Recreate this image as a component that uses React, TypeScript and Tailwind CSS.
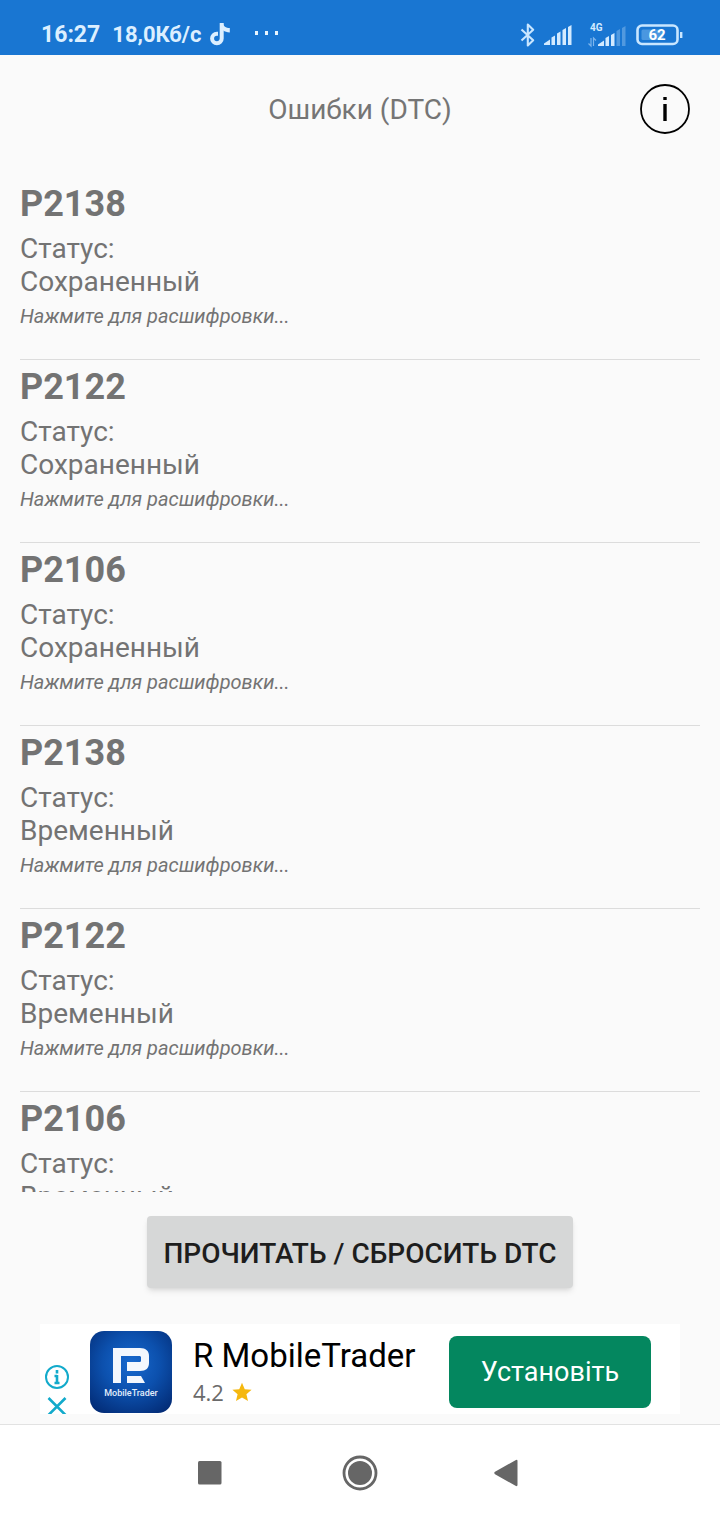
import React from "react";

const codes = [
  { code: "P2138", status: "Сохраненный" },
  { code: "P2122", status: "Сохраненный" },
  { code: "P2106", status: "Сохраненный" },
  { code: "P2138", status: "Временный" },
  { code: "P2122", status: "Временный" },
  { code: "P2106", status: "Временный" },
];

const TikTokIcon = () => (
  <svg width="20" height="24" viewBox="0 0 20 24" fill="none" aria-hidden="true">
    <path
      d="M11.700 0v15.500a4.800 4.800 0 1 1-4.800-4.800H8"
      stroke="#dcefff"
      strokeWidth="4"
    />
    <path d="M13 0c.3 3.200 2.800 5 6.800 5.100v4.300c-2.800 0-5-.8-6.800-2.200z" fill="#dcefff" />
  </svg>
);

const BluetoothIcon = () => (
  <svg width="16" height="24" viewBox="0 0 16 24" fill="none" aria-hidden="true">
    <path
      d="M1.500 6.500 13.200 17.300 7.800 22.500V1.500l5.400 5.200L1.500 17.500"
      stroke="#c9e6ff"
      strokeWidth="2.100"
      strokeLinejoin="round"
    />
  </svg>
);

const SignalIcon = () => (
  <svg width="28" height="20" viewBox="0 0 28 20" fill="#d3eaff" aria-hidden="true">
    <path d="M0 20v-1.500L6 14.500V20z" />
    <path d="M7.500 12.500 11 10.500V20H7.500z" />
    <path d="M13 8.500 16.500 6.500V20H13z" />
    <path d="M18.500 5 22 3v17h-3.500z" />
    <path d="M24 2 27.500 0v20H24z" />
  </svg>
);

const MobileSignal = () => (
  <svg width="38" height="28" viewBox="0 -3 38 28" fill="#d3eaff" aria-hidden="true">
    <text x="2" y="7" fontSize="10" fontWeight="700" fontFamily="Roboto, sans-serif">
      4G
    </text>
    <path d="M3 14v8L.5 19.500M5.500 22v-8L8 16.500" stroke="#7db5ec" strokeWidth="1.200" fill="none" />
    <path d="M10 22v-1.500l6-4V22z" />
    <path d="M17.500 14 21 12v10h-3.500z" />
    <path d="M23 11 26.500 9v13H23z" />
    <path d="M28.500 7 32 5v17h-3.500zM34 4l3.500-2v20H34z" opacity="0.300" />
  </svg>
);

const Battery = () => (
  <svg width="48" height="22" viewBox="0 0 48 22" fill="none" aria-hidden="true">
    <rect x="1.500" y="1.500" width="40" height="18.500" rx="4.500" stroke="#c9e6ff" strokeWidth="2.600" />
    <rect x="5.500" y="5.500" width="22" height="10.500" rx="1.500" fill="#4a97e0" />
    <path d="M45.200 8v6" stroke="#c9e6ff" strokeWidth="2.400" />
    <text
      x="21"
      y="16"
      textAnchor="middle"
      fontSize="15"
      fontWeight="700"
      fontFamily="Roboto, sans-serif"
      fill="#fff"
    >
      62
    </text>
  </svg>
);

const StatusBar = () => (
  <div className="flex h-[55px] shrink-0 items-center justify-between bg-[#1976d2] pt-[15px] pr-9 pl-[41px] text-[#dcefff]">
    <div className="flex items-center text-[23px] leading-6 font-bold">
      <span>16:27</span>
      <span className="ml-3 text-[22px]">18,0Кб/с</span>
      <span className="ml-2">
        <TikTokIcon />
      </span>
      <svg className="ml-6" width="26" height="8" viewBox="0 0 26 8" fill="#e8f5ff" aria-hidden="true">
        <path d="M1 0h3v4H1zM11 0h3v4h-3zM21 0h3v4h-3z" />
      </svg>
    </div>
    <div className="flex items-center">
      <BluetoothIcon />
      <span className="ml-2">
        <SignalIcon />
      </span>
      <span className="ml-4">
        <MobileSignal />
      </span>
      <span className="ml-2.5">
        <Battery />
      </span>
    </div>
  </div>
);

const Header = () => (
  <header className="grid h-[108px] shrink-0 grid-cols-[50px_1fr_50px] items-center px-[30px]">
    <h1 className="col-start-2 text-center text-[28px] leading-[33px] text-[#757575]">
      Ошибки (DTC)
    </h1>
    <button aria-label="Информация" className="size-[50px]">
      <svg width="50" height="50" viewBox="0 0 50 50" fill="none">
        <circle cx="25" cy="25" r="24" stroke="#000" strokeWidth="1.800" />
        <path d="M25 20v17M25 13v3" stroke="#000" strokeWidth="3.400" />
      </svg>
    </button>
  </header>
);

const CodeItem = ({
  code,
  status,
  hint,
}: {
  code: string;
  status: string;
  hint: boolean;
}) => (
  <li className="border-b border-[#dcdcdc] pt-1.5 pb-[31px] text-[#737373]">
    <h2 className="text-[36px] leading-[42px] font-bold">{code}</h2>
    <p className="mt-[7px] text-[28px] leading-[33px]">
      Статус:
      <br />
      {status}
    </p>
    {hint && (
      <p className="mt-[7px] text-[20px] leading-[23px] italic">
        Нажмите для расшифровки...
      </p>
    )}
  </li>
);

const AppLogo = () => (
  <svg width="82" height="82" viewBox="0 0 82 82" role="img" aria-label="MobileTrader">
    <defs>
      <radialGradient id="logo" cx="0.500" cy="0.400" r="0.700">
        <stop offset="0" stopColor="#1769cf" />
        <stop offset="0.500" stopColor="#0c50ad" />
        <stop offset="1" stopColor="#032d78" />
      </radialGradient>
    </defs>
    <rect width="82" height="82" rx="14" fill="url(#logo)" />
    <path
      d="M23 52V17h27c6 0 9 3 9 8v7c0 5-3 8-9 8H37v-9h12c1.500 0 2-.5 2-1.500v-3c0-1-.5-1.500-2-1.500H31v27z"
      fill="#f3f7fd"
    />
    <path d="M37 45h14l4 7H37z" fill="#f3f7fd" />
    <text
      x="41"
      y="65"
      textAnchor="middle"
      fontSize="9"
      fontWeight="500"
      fontFamily="Roboto, sans-serif"
      fill="#e3edfa"
    >
      MobileTrader
    </text>
  </svg>
);

const AdBanner = () => (
  <aside className="mx-10 mb-2.5 flex h-[90px] shrink-0 items-center overflow-hidden bg-white pt-1.5 pr-[29px]">
    <div className="ml-1 flex flex-col gap-1.5 self-end">
      <button aria-label="О рекламе">
        <svg width="26" height="26" viewBox="0 0 26 26" fill="none" stroke="#12aacb">
          <circle cx="13" cy="13" r="11" strokeWidth="2" />
          <path d="M13 11v9M13 6v3.500M10.500 12H13M10.500 19h5" strokeWidth="2.600" />
        </svg>
      </button>
      <button aria-label="Закрыть">
        <svg width="26" height="18" viewBox="0 0 26 18" fill="none" stroke="#12aacb" strokeWidth="2.600">
          <path d="M4.500 2l18 18M21.500 2l-18 18" />
        </svg>
      </button>
    </div>
    <div className="ml-5 shrink-0">
      <AppLogo />
    </div>
    <div className="ml-[21px] flex-1">
      <p className="text-[33px] leading-10 whitespace-nowrap text-black">R MobileTrader</p>
      <p className="flex items-center gap-2 font-['Open_Sans',sans-serif] text-[22px] leading-8 text-[#6a6a6a]">
        4.2
        <svg width="20" height="20" viewBox="0 0 24 24" fill="#f5b80f" aria-hidden="true">
          <path d="M12 1l3.300 7.600 8.200.7-6.200 5.400 1.900 8.100L12 18.500l-7.200 4.300 1.900-8.100L.5 9.300l8.200-.7z" />
        </svg>
      </p>
    </div>
    <button className="h-[72px] w-[202px] shrink-0 rounded-lg bg-[#04875f] text-[27px] text-white">
      Установіть
    </button>
  </aside>
);

const NavBar = () => (
  <nav className="grid h-24 shrink-0 grid-cols-[1fr_auto_1fr] items-center gap-[113px] border-t border-[#e2e2e2] bg-white">
    <button aria-label="Недавние" className="justify-self-end">
      <svg width="50" height="36" viewBox="0 0 50 36" fill="#666">
        <rect x="13" y="6" width="23.500" height="23.500" rx="1.500" />
      </svg>
    </button>
    <button aria-label="Домой" className="-mx-1.5">
      <svg width="36" height="36" viewBox="0 0 36 36" fill="#666">
        <circle cx="18" cy="18" r="16" fill="none" stroke="#666" strokeWidth="2.800" />
        <circle cx="18" cy="18" r="12" />
      </svg>
    </button>
    <button aria-label="Назад" className="justify-self-start">
      <svg width="50" height="36" viewBox="0 0 50 36" fill="#666">
        <path d="M10 16.800 30.500 5.200Q32.500 4.200 32.500 6v24q0 1.800-2 .8L10 19.200q-1.500-1.200 0-2.400z" />
      </svg>
    </button>
  </nav>
);

export default function App() {
  return (
    <div className="flex h-screen flex-col bg-[#fafafa] font-[Roboto,sans-serif]">
      <StatusBar />
      <Header />
      <main className="flex min-h-0 flex-1 flex-col">
        <ul className="min-h-0 flex-1 overflow-hidden px-5 pt-3.5">
          {codes.map((item, i) => (
            <CodeItem
              key={i}
              code={item.code}
              status={item.status}
              hint={i < codes.length - 1}
            />
          ))}
        </ul>
        <button className="mt-6 mb-9 h-[72px] shrink-0 self-center rounded-sm bg-[#d6d7d7] px-4 pt-1 text-[28px] font-medium text-[#1d1d1d] shadow-md">
          ПРОЧИТАТЬ / СБРОСИТЬ DTC
        </button>
      </main>
      <AdBanner />
      <NavBar />
    </div>
  );
}
